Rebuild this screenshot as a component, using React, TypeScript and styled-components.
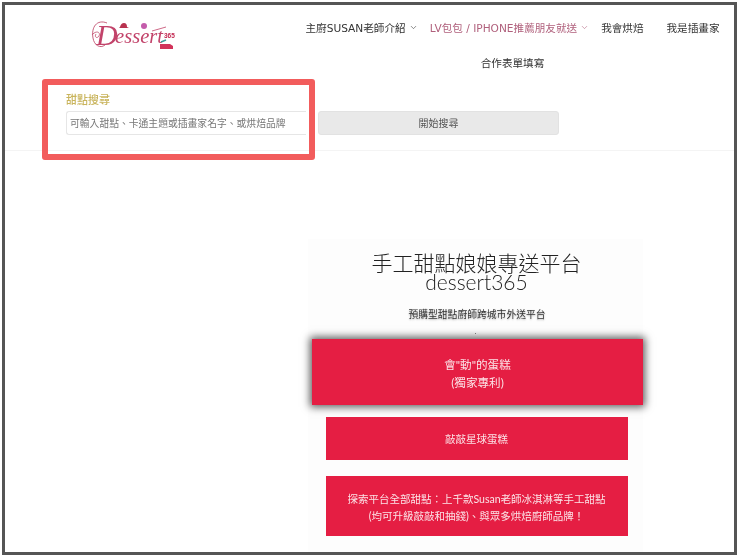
import { createGlobalStyle, styled } from 'styled-components';
import { ChevronDown } from 'lucide-react';

const GlobalStyle = createGlobalStyle`
  html, body {
    margin: 0;
    background: #fff;
  }
  * {
    box-sizing: border-box;
  }
`;

const NAV_ITEMS = [
  { label: '主廚SUSAN老師介紹', caret: true },
  { label: 'LV包包 / IPHONE推薦朋友就送', caret: true, active: true },
  { label: '我會烘焙' },
  { label: '我是插畫家' },
  { label: '合作表單填寫' },
];

function Logo() {
  return (
    <St.Logo viewBox='0 0 90 32' aria-label='Dessert365'>
      <path d='M17 5 C7 1 1 9 3 20 C4 27 10 31 15 27' fill='none' stroke='#c2506f' strokeWidth='0.9' />
      <path d='M2 17 C6 12 11 14 9 18 C7 21 4 19 6 16' fill='none' stroke='#c2506f' strokeWidth='0.8' />
      <text x='6' y='27' fontFamily='"Liberation Serif", serif' fontStyle='italic' fontSize='30' fill='#c2436a'>D</text>
      <text x='25' y='25' fontFamily='"Liberation Serif", serif' fontStyle='italic' fontSize='21' fill='#c2436a' textLength='48' lengthAdjust='spacingAndGlyphs'>essert</text>
      <path d='M62 13 L76 9' stroke='#c2436a' strokeWidth='0.8' />
      <path d='M30 9 Q31 5 34 5 Q37 5 37 9 L39 10 L29 10 Z' fill='#b8324f' />
      <circle cx='54' cy='8' r='3' fill='#c45cab' />
      <text x='74' y='20' fontFamily='"Liberation Sans", sans-serif' fontWeight='700' fontSize='6.5' fill='#c2264f'>365</text>
      <path d='M70 26 L80 26 L83 28 L83 31 L70 31 Z' fill='#d2335a' />
      <path d='M71 24 L76 22' stroke='#3e9a9a' strokeWidth='1.4' />
    </St.Logo>
  );
}

export default function App() {
  return (
    <St.Frame>
      <GlobalStyle />
      <St.Header>
        <Logo />
        <St.Nav>
          {NAV_ITEMS.map((item) => (
            <St.NavItem key={item.label} $active={item.active} $caret={item.caret}>
              {item.label}
              {item.caret && <ChevronDown size={9} strokeWidth={1.5} />}
            </St.NavItem>
          ))}
        </St.Nav>
      </St.Header>

      <St.Search>
        <St.SearchLabel>甜點搜尋</St.SearchLabel>
        <St.SearchRow>
          <St.SearchInput>可輸入甜點、卡通主題或插畫家名字、或烘焙品牌</St.SearchInput>
          <St.SearchButton>開始搜尋</St.SearchButton>
        </St.SearchRow>
        <St.Highlight />
      </St.Search>

      <St.Main>
        <St.Title>
          手工甜點娘娘專送平台
          <br />
          dessert365
        </St.Title>
        <St.Subtitle>預購型甜點廚師跨城市外送平台</St.Subtitle>
        <St.Dot />
        <St.FeatureCard>
          會"動"的蛋糕
          <br />
          (獨家專利)
        </St.FeatureCard>
        <St.CardList>
          <St.Card $height={43} $nudge={2}>敲敲星球蛋糕</St.Card>
          <St.Card $height={60} $nudge={4}>
            探索平台全部甜點：上千款Susan老師冰淇淋等手工甜點
            <br />
            (均可升級敲敲和抽錢)、與眾多烘焙廚師品牌！
          </St.Card>
        </St.CardList>
      </St.Main>
    </St.Frame>
  );
}

const St = {
  Frame: styled.div`
    display: flex;
    flex-direction: column;
    width: 735px;
    height: 553px;
    margin: 2px 0 0 2px;
    border: 3px solid #555;
    background: #fff;
    overflow: hidden;
    font-family: 'Lato', 'Noto Sans CJK TC', sans-serif;
    filter: blur(0.45px);
  `,

  Header: styled.header`
    display: flex;
    align-items: flex-start;
    height: 73px;
    padding: 5px 0 0 85px;
  `,

  Logo: styled.svg`
    width: 90px;
    height: 32px;
    margin-top: 8px;
    flex-shrink: 0;
    overflow: visible;
  `,

  Nav: styled.nav`
    display: flex;
    flex-wrap: wrap;
    justify-content: center;
    width: 438px;
    margin-left: auto;
    margin-right: 3px;
  `,

  NavItem: styled.a<{ $active?: boolean; $caret?: boolean }>`
    display: flex;
    align-items: center;
    gap: 3px;
    height: 35px;
    padding: 0 ${({ $caret }) => ($caret ? '0' : '11px')} 0 12px;
    font-family: 'DejaVu Sans', 'Noto Sans CJK TC', sans-serif;
    font-size: 10.6px;
    white-space: nowrap;
    color: ${({ $active }) => ($active ? '#b0607c' : '#333')};
  `,

  Search: styled.section`
    position: relative;
    height: 73px;
    padding: 15px 0 0 61px;
    border-bottom: 1px solid #f4f4f4;
  `,

  SearchLabel: styled.div`
    height: 14px;
    margin-bottom: 4px;
    font-size: 11px;
    line-height: 14px;
    font-weight: 500;
    color: #c9b45c;
  `,

  SearchRow: styled.div`
    display: flex;
    gap: 12px;
  `,

  SearchInput: styled.div`
    width: 240px;
    height: 24px;
    padding-left: 3px;
    border: 1px solid #e6e6e6;
    border-right: none;
    border-radius: 3px 0 0 3px;
    font-size: 9.8px;
    line-height: 23px;
    white-space: nowrap;
    color: #777;
  `,

  SearchButton: styled.div`
    width: 241px;
    height: 24px;
    border-radius: 3px;
    border: 1px solid #e2e2e2;
    background: #e9e9e9;
    text-align: center;
    font-size: 10px;
    line-height: 23px;
    color: #555;
  `,

  Highlight: styled.div`
    position: absolute;
    left: 37px;
    top: 1px;
    width: 273px;
    height: 81px;
    border: 6px solid #f25c5c;
    border-radius: 3px;
  `,

  Main: styled.main`
    display: flex;
    flex-direction: column;
    align-items: center;
    width: 335px;
    margin: 88px 0 0 303px;
    padding-top: 14px;
    background: #fdfdfd;
    flex: 1;
  `,

  Title: styled.h1`
    margin: 0;
    padding-left: 2px;
    font-family: 'Lato', 'Noto Sans CJK TC', sans-serif;
    font-size: 21px;
    line-height: 19px;
    font-weight: 300;
    text-align: center;
    color: #222;
  `,

  Subtitle: styled.p`
    margin: 16px 0 0;
    padding-left: 3px;
    font-size: 9.8px;
    line-height: 14px;
    font-weight: 400;
    color: #333;
    text-shadow: 0 1px 2px rgba(0, 0, 0, 0.3);
  `,

  Dot: styled.span`
    width: 1px;
    height: 1px;
    margin: 12px 0 5px;
    background: #888;
  `,

  FeatureCard: styled.a`
    display: block;
    align-self: flex-end;
    width: 331px;
    height: 66px;
    padding-top: 17px;
    background: #e51e43;
    box-shadow: 0 0 8px 2px rgba(0, 0, 0, 0.65);
    text-align: center;
    font-size: 11.6px;
    line-height: 18px;
    color: #fbe3e7;
  `,

  CardList: styled.div`
    display: flex;
    flex-direction: column;
    gap: 16px;
    margin: 12px 0 0 2px;
  `,

  Card: styled.a<{ $height: number; $nudge: number }>`
    display: flex;
    align-items: center;
    justify-content: center;
    width: 302px;
    height: ${({ $height }) => $height}px;
    padding-top: ${({ $nudge }) => $nudge}px;
    background: #e51e43;
    text-align: center;
    font-size: 10.5px;
    line-height: 17px;
    color: #fbe3e7;
  `,
};
